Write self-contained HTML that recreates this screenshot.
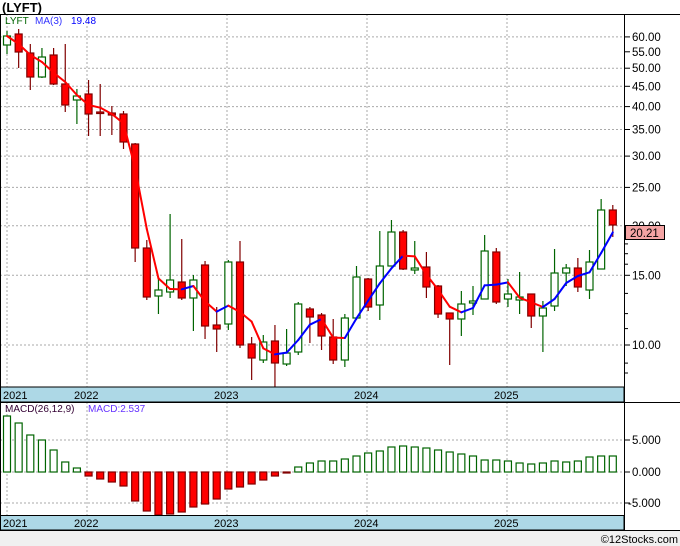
<!DOCTYPE html>
<html><head><style>
body{margin:0;background:#fff;width:680px;height:546px;overflow:hidden;font-family:"Liberation Sans",sans-serif}
</style></head><body>
<svg id="s" width="680" height="546" xmlns="http://www.w3.org/2000/svg" style="position:absolute;left:0;top:0"></svg>
<script>
var C=[
[36,45,31,54,'g'],[34,52,29,68,'r'],[53,77,44,90,'r'],[57,77,48,78,'g'],[55,84,48,85,'r'],
[84,105,44,112,'r'],[96,100,89,124,'g'],[94,114,80,136,'r'],[112,113,84,136,'r'],[113,115,106,135,'r'],
[114,142,111,149,'r'],[144,248,143,262,'r'],[248,297,240,300,'r'],[290,296,277,314,'g'],[280,292,214,298,'g'],
[282,298,239,300,'r'],[280,298,275,331,'g'],[265,326,261,339,'r'],[325,329,307,352,'r'],[262,324,260,330,'g'],
[262,345,241,348,'r'],[344,358,337,380,'r'],[342,360,335,363,'g'],[341,363,325,387,'r'],[353,364,329,366,'g'],
[304,352,302,355,'g'],[309,317,307,343,'r'],[315,336,313,350,'r'],[337,360,319,364,'r'],[318,360,314,367,'g'],
[277,318,266,320,'g'],[279,307,278,311,'r'],[266,305,231,320,'g'],[232,266,220,266,'g'],[232,269,230,270,'r'],
[268,270,241,274,'g'],[267,287,252,298,'r'],[286,314,285,318,'r'],[313,319,313,365,'r'],[304,319,291,336,'g'],
[301,303,286,315,'g'],[251,299,235,299,'g'],[252,302,248,304,'r'],[294,299,279,307,'g'],[297,300,272,314,'g'],
[294,316,294,328,'r'],[308,316,301,352,'g'],[273,306,249,311,'g'],[268,273,264,286,'g'],[268,287,258,292,'r'],
[262,290,250,299,'g'],[210,269,199,269,'g'],[210,225,205,237,'r']];
var M=[416,423,435,440,450,462,468,476,479,482,486,501,511,515,514,512,507,504,499,489,487,484,480,476,473,467,463,461,461,459,456,453,451,447,446,447,448,450,452,454,456,460,460,461,463,464,463,461,462,461,457,456,456];
var h='';
h+='<rect x="0" y="530" width="680" height="16" fill="#f0f0f0"/>';
// grids
var P=[60,50,45,40,35,30,25,20,15,10];
function py(p){return 345-396*Math.log10(p/10);}
P.forEach(function(p){var y=py(p).toFixed(1);h+='<line x1="0" x2="624" y1="'+y+'" y2="'+y+'" stroke="#aaa" stroke-dasharray="2,2"/>';});
[440,472,503].forEach(function(y){h+='<line x1="0" x2="624" y1="'+y+'" y2="'+y+'" stroke="#aaa" stroke-dasharray="2,2"/>';});
[7,87,227,367,507].forEach(function(x){h+='<line x1="'+x+'" x2="'+x+'" y1="14" y2="530" stroke="#aaa" stroke-dasharray="2,2"/>';});
// candles
function cx(i){return 7+11.65*i;}
C.forEach(function(c,i){var x=cx(i);var col=c[4]=='g'?'#006400':'#800000';
h+='<line x1="'+x+'" x2="'+x+'" y1="'+c[2]+'" y2="'+c[3]+'" stroke="'+col+'" stroke-width="1.2"/>';
var hh=Math.max(c[1]-c[0],1.5);
h+='<rect x="'+(x-3.5)+'" y="'+c[0]+'" width="7" height="'+hh+'" fill="'+(c[4]=='g'?'#fff':'#f00')+'" stroke="'+col+'" stroke-width="1.2"/>';});
// MA
var cl=C.map(function(c){return c[4]=='g'?c[0]:c[1];});
var ma=[];for(var i=0;i<C.length;i++){var a=cl.slice(Math.max(0,i-2),i+1);ma.push(a.reduce(function(s,v){return s+v;},0)/a.length);}
for(var i=1;i<ma.length;i++){var col=ma[i]<ma[i-1]?'#0000ff':'#ff0000';
h+='<line x1="'+cx(i-1)+'" y1="'+ma[i-1]+'" x2="'+cx(i)+'" y2="'+ma[i]+'" stroke="'+col+'" stroke-width="2" stroke-linecap="round"/>';}
// MACD bars
M.forEach(function(t,i){var x=cx(i);var z=472;
if(t<z)h+='<rect x="'+(x-3.5)+'" y="'+t+'" width="7" height="'+(z-t)+'" fill="#fff" stroke="#006400" stroke-width="1.2"/>';
else h+='<rect x="'+(x-3.5)+'" y="'+z+'" width="7" height="'+(t-z)+'" fill="#f00" stroke="#800000" stroke-width="1.2"/>';});
// bands
h+='<rect x="0" y="387" width="624" height="15" fill="#add8e6" stroke="#000"/>';
h+='<rect x="0" y="515.5" width="624" height="14.5" fill="#add8e6" stroke="#000"/>';
[['2021',3],['2022',74],['2023',214],['2024',354],['2025',494]].forEach(function(t){
h+='<text x="'+t[1]+'" y="399" font-size="11" fill="#000">'+t[0]+'</text>';
h+='<text x="'+t[1]+'" y="527" font-size="11" fill="#000">'+t[0]+'</text>';});
// borders
h+='<line x1="0" x2="680" y1="14.5" y2="14.5" stroke="#000"/>';
h+='<line x1="624.5" x2="624.5" y1="14" y2="530" stroke="#000"/>';
h+='<line x1="0" x2="680" y1="402.5" y2="402.5" stroke="#000"/>';
h+='<line x1="0" x2="680" y1="530.5" y2="530.5" stroke="#000"/>';
h+='<line x1="0.5" x2="0.5" y1="14" y2="530" stroke="#000"/>';
// axis labels
[60,55,50,45,40,35,30,25,20,15,10].forEach(function(p){var y=py(p);
h+='<line x1="624" x2="630" y1="'+y.toFixed(1)+'" y2="'+y.toFixed(1)+'" stroke="#000"/>';
h+='<text x="632" y="'+(y+4).toFixed(1)+'" font-size="11.5">'+p.toFixed(2)+'</text>';});
[17,12,13.5,11,9,8.5,18,16].forEach(function(p){var y=py(p);h+='<line x1="624" x2="628" y1="'+y.toFixed(1)+'" y2="'+y.toFixed(1)+'" stroke="#000"/>';});
[[440,'5.000',632],[472,'0.000',632],[503,'-5.000',628]].forEach(function(t){
h+='<line x1="624" x2="630" y1="'+t[0]+'" y2="'+t[0]+'" stroke="#000"/>';
h+='<text x="'+t[2]+'" y="'+(t[0]+4)+'" font-size="11.5">'+t[1]+'</text>';});
h+='<rect x="625.5" y="225.5" width="39" height="14" fill="#f4a4a4" stroke="#000"/>';
h+='<text x="630" y="237" font-size="11.5">20.21</text>';
// titles
h+='<text x="2" y="12" font-size="13" font-weight="bold">(LYFT)</text>';
h+='<text x="5" y="24" font-size="10" fill="#006400">LYFT</text>';
h+='<text x="35" y="24" font-size="10" fill="#3333ff">MA(3)</text>';
h+='<text x="71" y="24" font-size="10" fill="#0000ff">19.48</text>';
h+='<text x="5" y="412" font-size="10" fill="#330033">MACD(26,12,9)</text>';
h+='<text x="88" y="412" font-size="10" fill="#6633ff">MACD:2.537</text>';
h+='<text x="678" y="543" font-size="11" text-anchor="end">©12Stocks.com</text>';
document.getElementById('s').innerHTML=h;
</script>
</body></html>
